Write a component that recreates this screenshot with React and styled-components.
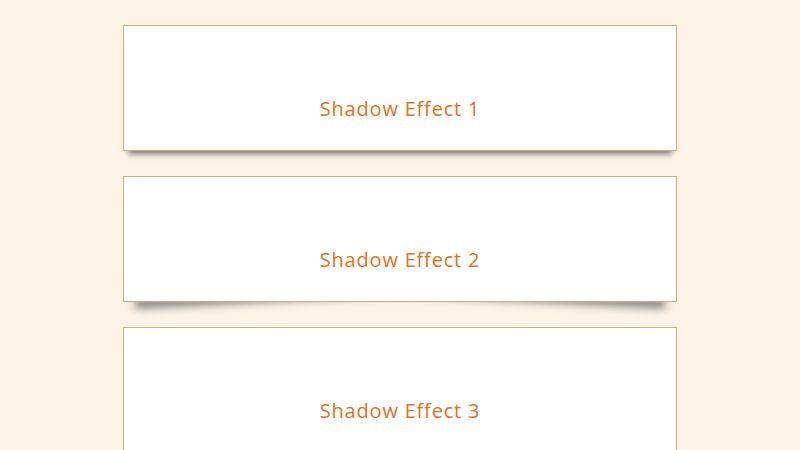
import React from "react";
import styled, { createGlobalStyle, css } from "styled-components";

const GlobalStyle = createGlobalStyle`
  body {
    margin: 0;
    background: #fdf4e7;
    font-family: "Open Sans", "Liberation Sans", sans-serif;
  }
`;

// lifted corner, shared by effects 2 and 3
const corner = css`
  content: "";
  position: absolute;
  z-index: -1;
  bottom: 15px;
  left: 10px;
  width: 50%;
  top: 80%;
  max-width: 300px;
  background: #777;
  box-shadow: 0 15px 10px #777;
  transform: rotate(-3deg);
`;

const effects = {
  1: css`
    box-shadow: 0 8px 6px -5px #777;
  `,
  2: css`
    &::before,
    &::after {
      ${corner}
    }
    &::after {
      left: auto;
      right: 10px;
      transform: rotate(3deg);
    }
  `,
  3: css`
    &::before {
      ${corner}
    }
  `,
};

const Page = styled.main`
  display: flex;
  flex-direction: column;
  align-items: center;
  gap: 25px;
  padding-top: 25px;
`;

const Box = styled.div`
  position: relative;
  box-sizing: border-box;
  width: 554px;
  height: 126px;
  padding-bottom: 31px;
  border: 1px solid #d6ab78;
  background: #fff;
  display: flex;
  align-items: flex-end;
  justify-content: center;
  ${(p) => effects[p.$effect]}
`;

const Label = styled.h3`
  margin: 0;
  color: #e6701a;
  font-size: 20px;
  font-weight: 500;
  letter-spacing: 0.8px;
  line-height: 1;
`;

export default function App() {
  return (
    <>
      <GlobalStyle />
      <Page>
        {[1, 2, 3].map((n) => (
          <Box key={n} $effect={n}>
            <Label>Shadow Effect {n}</Label>
          </Box>
        ))}
      </Page>
    </>
  );
}
